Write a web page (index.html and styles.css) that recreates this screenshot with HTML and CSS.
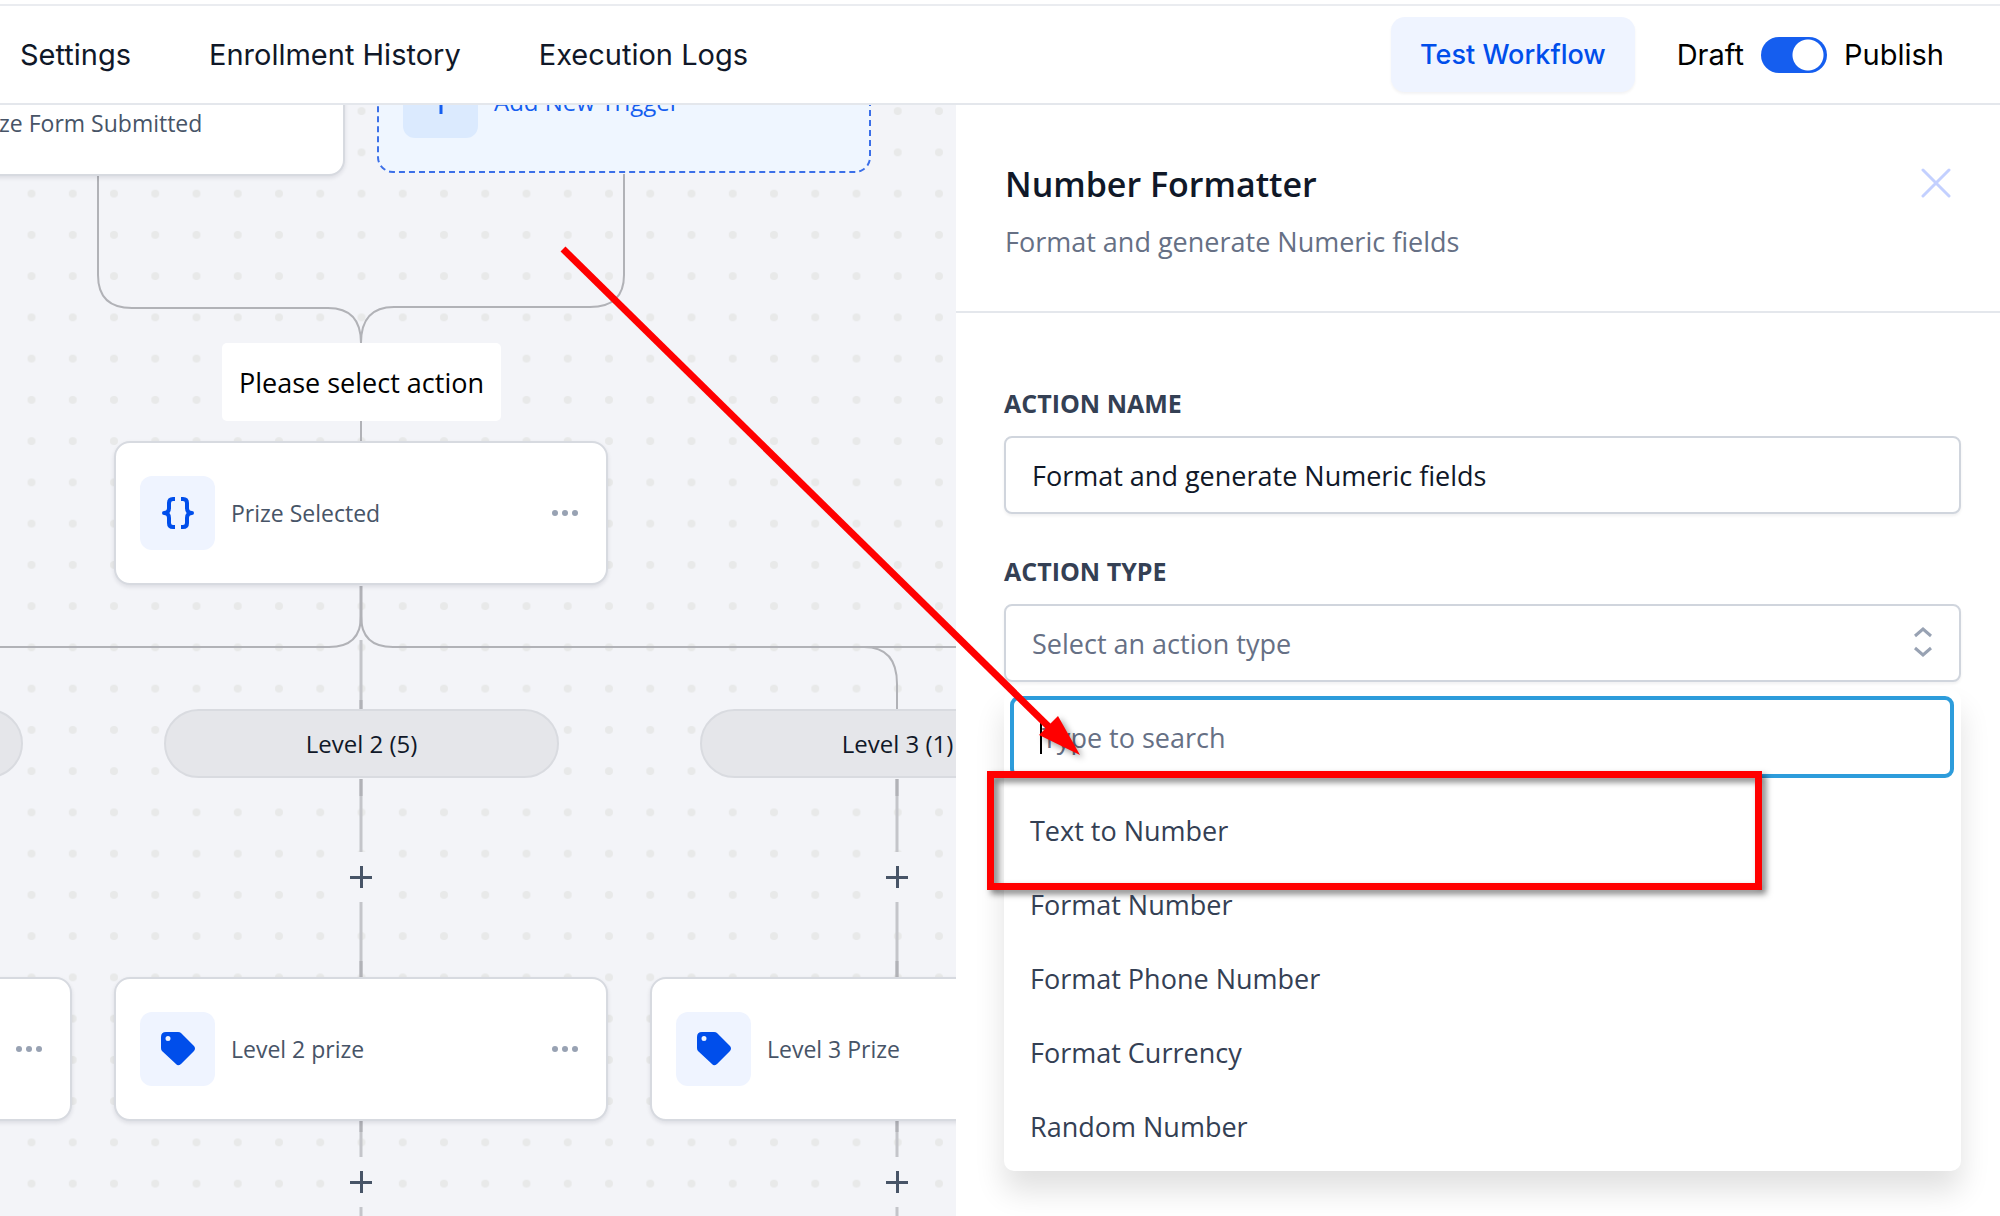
FILE: index.html
```html
<!DOCTYPE html>
<html lang="en">
<head>
    <meta charset="UTF-8">
    <meta name="viewport" content="width=device-width, initial-scale=1.0">
    <title>Workflow Builder</title>
    <link rel="stylesheet" href="styles.css">
</head>
<body>
    <header class="topbar">
        <nav class="tabs">
            <a href="#settings">Settings</a>
            <a href="#history">Enrollment History</a>
            <a href="#logs">Execution Logs</a>
        </nav>
        <div class="topbar-actions">
            <button type="button" class="test-btn">Test Workflow</button>
            <div class="publish">
                <span>Draft</span>
                <input type="checkbox" id="publishToggle" class="toggle" checked>
                <label for="publishToggle">Publish</label>
            </div>
        </div>
    </header>

    <main class="workspace">
        <section class="canvas">
            <!-- dot grid and connectors -->
            <svg class="edges" width="956" height="1111" viewBox="0 105 956 1111" fill="none">
                <defs>
                    <pattern id="dots" x="10.9" y="8" width="41.25" height="41.25" patternUnits="userSpaceOnUse">
                        <circle cx="20.6" cy="20.6" r="4" fill="#e8e9e9"/>
                    </pattern>
                </defs>
                <rect x="0" y="105" width="956" height="1111" fill="url(#dots)"/>
                <g class="line">
                    <path d="M98 175V275Q98 308 132 308H328Q361 308 361 343"/>
                    <path d="M624 174V275Q624 307 590 307H394Q361 307 361 343"/>
                    <path d="M361 586V616Q361 647 329 647H0"/>
                    <path d="M361 586V616Q361 647 393 647H956"/>
                    <path d="M864 647Q897 647 897 684V709"/>
                    <path d="M361 421V442"/>
                </g>
                <g class="line line-light">
                    <path d="M361 640V709M361 779V852M361 902V978M361 1121V1158M361 1207V1216"/>
                    <path d="M897 779V852M897 902V978M897 1121V1158M897 1207V1216"/>
                </g>
                <g class="line line-dark">
                    <path d="M361 586V625M361 700V709M361 779V796M361 961V978M361 1121V1132"/>
                    <path d="M897 779V796M897 961V978M897 1121V1132"/>
                </g>
            </svg>

            <div class="node trigger">
                <span class="node-label">Prize Form Submitted</span>
            </div>
            <button type="button" class="node add-trigger">
                <span class="node-icon">
                    <svg width="28" height="28" viewBox="0 0 28 28"><path d="M14 1V27M1 14H27" stroke="#155eef" stroke-width="3"/></svg>
                </span>
                <span>Add New Trigger</span>
            </button>

            <div class="tooltip">Please select action</div>

            <div class="node prize">
                <span class="node-icon">
                    <svg width="32" height="34" viewBox="0 0 32 34" fill="none" stroke="#004eeb" stroke-width="4" stroke-linejoin="round">
                        <path d="M13 3H11Q7 3 7 7V12Q7 17 2 17Q7 17 7 22V27Q7 31 11 31H13"/>
                        <path d="M19 3H21Q25 3 25 7V12Q25 17 30 17Q25 17 25 22V27Q25 31 21 31H19"/>
                    </svg>
                </span>
                <span class="node-label">Prize Selected</span>
                <button type="button" class="more" aria-label="More"><i></i><i></i><i></i></button>
            </div>

            <div class="pill level-1"></div>
            <div class="pill level-2">Level 2 (5)</div>
            <div class="pill level-3">Level 3 (1)</div>

            <button type="button" class="add-step step-a" aria-label="Add step"></button>
            <button type="button" class="add-step step-b" aria-label="Add step"></button>
            <button type="button" class="add-step step-c" aria-label="Add step"></button>
            <button type="button" class="add-step step-d" aria-label="Add step"></button>

            <div class="node prize-1">
                <button type="button" class="more" aria-label="More"><i></i><i></i><i></i></button>
            </div>
            <div class="node prize-2">
                <span class="node-icon">
                    <svg width="34" height="34" viewBox="0 0 34 34"><path fill="#004eeb" fill-rule="evenodd" d="M5 0H17Q19 0 20 1L33 14Q35 16.500 33 19L20 32Q17 34.500 15 32L1 19Q0 18 0 16V5Q0 0 5 0ZM7 4A2.500 2.500 0 1 0 7 9A2.500 2.500 0 1 0 7 4Z"/></svg>
                </span>
                <span class="node-label">Level 2 prize</span>
                <button type="button" class="more" aria-label="More"><i></i><i></i><i></i></button>
            </div>
            <div class="node prize-3">
                <span class="node-icon">
                    <svg width="34" height="34" viewBox="0 0 34 34"><path fill="#004eeb" fill-rule="evenodd" d="M5 0H17Q19 0 20 1L33 14Q35 16.500 33 19L20 32Q17 34.500 15 32L1 19Q0 18 0 16V5Q0 0 5 0ZM7 4A2.500 2.500 0 1 0 7 9A2.500 2.500 0 1 0 7 4Z"/></svg>
                </span>
                <span class="node-label">Level 3 Prize</span>
            </div>
        </section>

        <aside class="panel">
            <div class="panel-head">
                <div>
                    <h1>Number Formatter</h1>
                    <p>Format and generate Numeric fields</p>
                </div>
                <button type="button" class="close" aria-label="Close">
                    <svg width="30" height="30" viewBox="0 0 30 30"><path d="M2 2L28 28M28 2L2 28" stroke="#c3d0ff" stroke-width="3" stroke-linecap="round"/></svg>
                </button>
            </div>

            <form class="panel-body">
                <div class="field">
                    <label for="actionName">ACTION NAME</label>
                    <input type="text" id="actionName" class="control" value="Format and generate Numeric fields">
                </div>
                <div class="field">
                    <label for="actionType">ACTION TYPE</label>
                    <div class="select-wrap">
                        <select id="actionType" class="control">
                            <option>Select an action type</option>
                        </select>
                        <svg class="chevrons" width="18" height="30" viewBox="0 0 18 30" fill="none" stroke="#98a2b3" stroke-width="3"><path d="M1 9L9 2L17 9M1 21L9 28L17 21"/></svg>

                        <div class="dropdown">
                            <div class="search">
                                <input type="text" placeholder="Type to search" aria-label="Search action type">
                                <span class="caret"></span>
                            </div>
                            <ul class="options">
                                <li class="highlighted"><button type="button">Text to Number</button></li>
                                <li><button type="button">Format Number</button></li>
                                <li><button type="button">Format Phone Number</button></li>
                                <li><button type="button">Format Currency</button></li>
                                <li><button type="button">Random Number</button></li>
                            </ul>
                        </div>
                    </div>
                </div>
            </form>
        </aside>

        <!-- arrow pointing at the highlighted option -->
        <svg class="arrow" width="540" height="530" viewBox="560 240 540 530">
            <path d="M563 249L1049 727" stroke="#f00" stroke-width="7"/>
            <path class="arrow-head" d="M1058 716L1080 755L1039 735Z" fill="#f00"/>
        </svg>
    </main>
</body>
</html>
```
FILE: styles.css
```css
*,
*::after {
    box-sizing: border-box;
}

body {
    margin: 0;
    min-height: 100vh;
    display: flex;
    flex-direction: column;
    font-family: "Open Sans", "Noto Sans", sans-serif;
    font-size: 27px;
    color: #101828;
    background-color: #fff;
    overflow: hidden;
}

button,
input,
select {
    font: inherit;
    color: inherit;
    margin: 0;
}

button {
    border: 0;
    padding: 0;
    background: none;
    cursor: pointer;
}

/* Top bar */
.topbar {
    display: flex;
    justify-content: space-between;
    align-items: center;
    height: 101px;
    margin-top: 4px;
    padding: 0 56px 0 20px;
    border-top: 2px solid #eaecf0;
    border-bottom: 2px solid #e4e7ec;
    font-family: Inter, sans-serif;
    font-size: 29px;
}

.tabs {
    display: flex;
    gap: 78px;
}

.tabs a {
    color: #101828;
    text-decoration: none;
}

.topbar-actions {
    display: flex;
    align-items: center;
    gap: 42px;
}

.test-btn {
    height: 75px;
    padding: 0 29px;
    border-radius: 14px;
    background-color: #eff4ff;
    color: #004eeb;
    box-shadow: 0 2px 3px rgba(16, 24, 40, 0.05);
    font-size: 27px;
    font-weight: 500;
}

.publish {
    display: flex;
    align-items: center;
    gap: 17px;
    color: #000;
}

.toggle {
    appearance: none;
    width: 66px;
    height: 36px;
    border-radius: 18px;
    background: radial-gradient(circle at 47px 18px, #fff 15px, #155eef 16px);
}

/* Workspace */
.workspace {
    position: relative;
    flex: 1;
    display: flex;
    min-height: 1111px;
}

.canvas {
    position: relative;
    flex: 1;
    overflow: hidden;
    background-color: #f3f4f8;
}

.edges {
    position: absolute;
    left: 0;
    top: 0;
}

.line {
    stroke: #b1b2b7;
    stroke-width: 2;
}

.line-light {
    stroke: #c4c5ca;
    stroke-width: 3;
}

.line-dark {
    stroke-width: 3;
}

.node {
    position: absolute;
    display: flex;
    align-items: center;
    gap: 16px;
    width: 494px;
    height: 144px;
    padding: 0 28px 0 24px;
    border: 2px solid #d7dae0;
    border-radius: 16px;
    background-color: #fff;
    box-shadow: 0 2px 4px rgba(16, 24, 40, 0.1);
    font-size: 23px;
}

.node-label {
    color: #475467;
}

.node-icon {
    display: flex;
    align-items: center;
    justify-content: center;
    width: 75px;
    height: 74px;
    border-radius: 12px;
    background-color: #eff4ff;
}

.more {
    display: flex;
    gap: 4px;
    margin-left: auto;
}

.more i {
    width: 6px;
    height: 6px;
    border-radius: 50%;
    background-color: #98a2b3;
}

.trigger {
    left: -149px;
    top: -36px;
    height: 107px;
    padding-left: 117px;
}

.add-trigger {
    left: 377px;
    top: -76px;
    border: 2px dashed #3b6fe8;
    background-color: #eff6ff;
    box-shadow: none;
    color: #155eef;
    font-size: 24px;
}

.add-trigger .node-icon {
    background-color: #dbeafe;
}

.prize {
    left: 114px;
    top: 336px;
}

.prize-1 {
    left: -422px;
    top: 872px;
}

.prize-2 {
    left: 114px;
    top: 872px;
}

.prize-3 {
    left: 650px;
    top: 872px;
}

.tooltip {
    position: absolute;
    left: 222px;
    top: 238px;
    width: 279px;
    height: 78px;
    border-radius: 5px;
    background-color: #fff;
    color: #000;
    line-height: 80px;
    text-align: center;
}

.pill {
    position: absolute;
    top: 604px;
    width: 395px;
    height: 69px;
    border: 2px solid #d9dbe0;
    border-radius: 35px;
    background-color: #e5e6ea;
    color: #101828;
    font-size: 24px;
    line-height: 65px;
    text-align: center;
}

.level-1 {
    left: -372px;
}

.level-2 {
    left: 164px;
}

.level-3 {
    left: 700px;
}

.add-step {
    position: absolute;
    width: 50px;
    height: 50px;
    background:
        linear-gradient(#475467, #475467) center / 22px 3px no-repeat,
        linear-gradient(#475467, #475467) center / 3px 22px no-repeat,
        #f3f4f8;
}

.step-a {
    left: 336px;
    top: 747px;
}

.step-b {
    left: 872px;
    top: 747px;
}

.step-c {
    left: 336px;
    top: 1052px;
}

.step-d {
    left: 872px;
    top: 1052px;
}

/* Side panel */
.panel {
    flex: 0 0 52.2%;
    background-color: #fff;
}

.panel-head {
    display: flex;
    justify-content: space-between;
    align-items: flex-start;
    height: 208px;
    padding: 54px 49px 0;
    border-bottom: 2px solid #e4e7ec;
}

.panel-head h1 {
    margin: 0;
    font-size: 34px;
    font-weight: 600;
    line-height: 50px;
}

.panel-head p {
    margin: 11px 0 0;
    line-height: 44px;
    color: #667085;
}

.close {
    margin: 9px 0 0;
    line-height: 0;
}

.panel-body {
    padding: 74px 39px 0 48px;
}

.field {
    margin-bottom: 41px;
}

.field label {
    display: block;
    margin-bottom: 17px;
    color: #344054;
    font-size: 25px;
    font-weight: 700;
    line-height: 32px;
}

.control {
    display: block;
    appearance: none;
    width: 100%;
    height: 78px;
    padding: 0 26px;
    border: 2px solid #d0d5dd;
    border-radius: 8px;
    background-color: #fff;
    box-shadow: 0 2px 3px rgba(16, 24, 40, 0.06);
    color: #101828;
}

select.control {
    color: #667085;
}

.select-wrap {
    position: relative;
}

.chevrons {
    position: absolute;
    right: 29px;
    top: 23px;
}

.dropdown {
    position: absolute;
    left: 0;
    right: 0;
    top: 86px;
    padding: 6px 7px 8px 6px;
    border-radius: 10px;
    background-color: #fff;
    box-shadow: 0 20px 30px rgba(0, 0, 0, 0.12);
}

.search {
    position: relative;
}

.search input {
    display: block;
    width: 100%;
    height: 82px;
    padding: 0 28px;
    border: 4px solid #2d9cdb;
    border-radius: 9px;
    outline: 0;
    background-color: #fff;
}

.search input::placeholder {
    color: #667085;
    opacity: 1;
}

.caret {
    position: absolute;
    left: 30px;
    top: 24px;
    width: 2px;
    height: 34px;
    background-color: #000;
}

.options {
    margin: 15px 0 0;
    padding: 0;
    list-style: none;
}

.options li {
    position: relative;
}

.options button {
    display: block;
    width: 100%;
    height: 74px;
    padding: 0 20px;
    color: #344054;
    text-align: left;
}

/* red frame around the option */
.highlighted::after {
    content: "";
    position: absolute;
    left: -23px;
    top: -22px;
    width: 775px;
    height: 119px;
    border: 7px solid #f00;
    filter: drop-shadow(4px 4px 3px rgba(0, 0, 0, 0.5));
    pointer-events: none;
}

.arrow {
    position: absolute;
    left: 560px;
    top: 135px;
    pointer-events: none;
}

.arrow-head {
    filter: drop-shadow(3px 3px 3px rgba(0, 0, 0, 0.4));
}
```
